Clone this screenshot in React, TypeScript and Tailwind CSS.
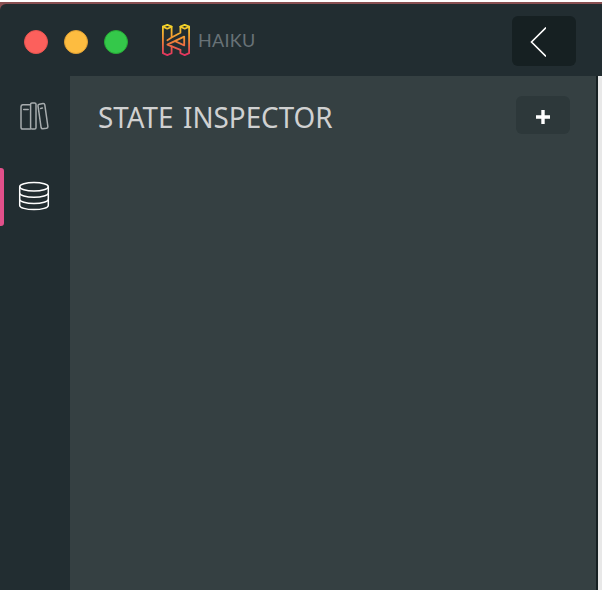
function TrafficLights() {
  return (
    <div className="flex gap-4">
      <span className="size-6 rounded-full border border-[#e9544f] bg-[#fc605c]" />
      <span className="size-6 rounded-full border border-[#e0a033] bg-[#fdbc40]" />
      <span className="size-6 rounded-full border border-[#27aa35] bg-[#34c84a]" />
    </div>
  );
}

function HaikuMark() {
  return (
    <svg className="h-8 w-7 shrink-0" viewBox="0 0 28 32" fill="none" stroke="url(#haiku)" strokeWidth="1.8" strokeLinejoin="round" strokeLinecap="round">
      <defs>
        <linearGradient id="haiku" x1="0" y1="0" x2="0" y2="32" gradientUnits="userSpaceOnUse">
          <stop offset="0" stopColor="#f5dc28" />
          <stop offset=".5" stopColor="#f28a35" />
          <stop offset="1" stopColor="#e02d62" />
        </linearGradient>
      </defs>
      <path d="M.9 2.7 5.3.9l4.3 1.8-4.3 2ZM18.4 2.7 22.7.9l4.4 1.8-4.4 2Z" />
      <path d="M.9 2.7v26.5l4.4 1.9 4.3-1.9v-6.7M18.4 25.9v3.3l4.3 1.9 4.4-1.9V2.7" />
      <path d="M9.6 2.7v10.8l8.8-4.8v-6M9.6 13.5l-4.2 2.7M22.2 12.6 5.4 20.6l13 5.3M13.2 17.2l9 4.2v-8.8" />
    </svg>
  );
}

function BooksIcon() {
  return (
    <svg className="h-7 w-[30px]" viewBox="0 0 30 28" fill="none" stroke="#a7acae" strokeWidth="1.5" strokeLinejoin="round" strokeLinecap="round">
      <path d="M10.3 2.8H2.7Q1 3.1 1 4.7v20.6q0 1.8 1.7 1.8h7.6" />
      <rect x="10.6" y=".9" width="5.4" height="26.2" rx="1.4" />
      <path d="m19.3 2.2 3.8-.7q1.5-.1 1.7 1.3l3.1 21.7q.1 1.4-1.3 1.7l-3.8.6q-1.4.1-1.7-1.3L18 3.8q-.1-1.3 1.3-1.6ZM3.7 7.4h4.5M20.6 6.4l1.8-.3" />
    </svg>
  );
}

function DatabaseIcon() {
  return (
    <svg className="h-[30px] w-8" viewBox="0 0 32 30" fill="none" stroke="#fff" strokeWidth="1.5">
      <ellipse cx="16" cy="5.8" rx="14.3" ry="4.2" />
      <path d="M1.7 5.8v18.6c0 2.3 6.4 4.2 14.3 4.2s14.3-1.9 14.3-4.2V5.8M1.7 12c0 2.3 6.4 4.2 14.3 4.2S30.3 14.3 30.3 12M1.7 18.2c0 2.3 6.4 4.2 14.3 4.2s14.3-1.9 14.3-4.2" />
    </svg>
  );
}

export default function App() {
  return (
    <div className="h-[590px] w-[602px] overflow-hidden bg-white pt-[2px]">
      <div className="h-[588px] bg-[#894f51] pt-[2px]">
        <div className="flex h-[586px] flex-col overflow-hidden rounded-tl-[6px] bg-[#222d31]">
          <header className="flex h-[72px] shrink-0 items-start pr-[26px] pl-6">
            <div className="pt-[26px]"><TrafficLights /></div>
            <div className="ml-[34px] flex items-center gap-2 pt-5">
              <HaikuMark />
              <span className="font-['Lato',sans-serif] text-[18px] leading-8 tracking-[0.3px] text-[#687277]">HAIKU</span>
            </div>
            <button className="mt-3 ml-auto h-[50px] w-16 rounded-md bg-[#162022]" aria-label="Back">
              <svg className="mt-px ml-[18px] h-8 w-4" viewBox="0 0 16 32" fill="none" stroke="#fff" strokeWidth="1.6">
                <path d="M16 1.5 1.5 16 16 30.5" />
              </svg>
            </button>
          </header>
          <div className="flex min-h-0 flex-1">
            <nav className="flex w-[70px] shrink-0 flex-col">
              <div className="flex h-[92px] items-start pt-[26px] pl-[19.5px]"><BooksIcon /></div>
              <div className="flex h-[58px] items-center">
                <span className="h-[58px] w-1 rounded-r-[3px] bg-[#e2508a]" />
                <span className="ml-[14px] pb-[2px]"><DatabaseIcon /></span>
              </div>
            </nav>
            <main className="flex w-[526px] shrink-0 items-start justify-between bg-[#354042] pt-5 pr-[26px] pl-7">
              <h1 className="origin-left scale-x-[0.958] font-['Noto_Sans',sans-serif] text-[29px] leading-[41px] [word-spacing:2.5px] whitespace-nowrap text-[#d0d1d1]">STATE INSPECTOR</h1>
              <button className="flex h-[38px] w-[54px] items-center justify-center rounded-md bg-[#2d383a]" aria-label="Add state">
                <svg className="mt-[3px] size-[14px]" viewBox="0 0 14 14" stroke="#fff" strokeWidth="3.4">
                  <path d="M7 0v14M0 7h14" />
                </svg>
              </button>
            </main>
            <div className="w-[2px] bg-[#162022]" />
            <div className="flex-1 bg-[#e8e8e8]" />
          </div>
        </div>
      </div>
    </div>
  );
}
